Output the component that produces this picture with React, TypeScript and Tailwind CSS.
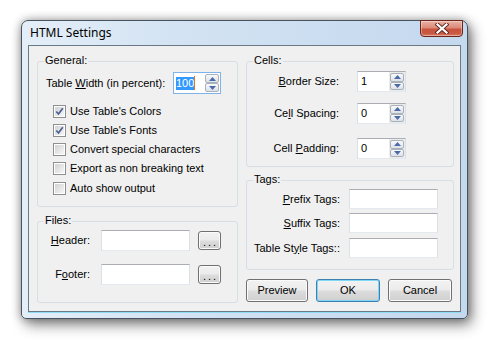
import React from "react";

const F = "font-['Liberation_Sans',Arial,sans-serif] text-[11px] leading-[13px] text-black";

function Field({ w, h = 20, children }: { w: number; h?: number; children?: React.ReactNode }) {
  return (
    <div
      className="flex items-center border border-t-[#abadb3] border-x-[#dbdfe6] border-b-[#e3e9ef] bg-white pl-[3px]"
      style={{ width: w, height: h }}
    >
      {children}
    </div>
  );
}

function SpinBtn({ up }: { up?: boolean }) {
  return (
    <div className="flex flex-1 items-center justify-center rounded-[2px] border border-[#a9b1bb] bg-linear-to-b from-[#f8f9fa] to-[#dde2e8]">
      <svg width="7" height="4" viewBox="0 0 7 4">
        {up ? <path d="M0 4 L3.5 0 L7 4 Z" fill="#4d6aa8" /> : <path d="M0 0 L3.5 4 L7 0 Z" fill="#4d6aa8" />}
      </svg>
    </div>
  );
}

function Spin({ value }: { value: string }) {
  return (
    <div className="flex h-[21px] w-[49px] border border-t-[#abadb3] border-x-[#dbdfe6] border-b-[#e3e9ef] bg-white">
      <div className="flex flex-1 items-center pl-[3px]">{value}</div>
      <div className="flex w-[16px] flex-col bg-[#ececec] p-px">
        <SpinBtn up />
        <SpinBtn />
      </div>
    </div>
  );
}

function Check({ checked, label }: { checked?: boolean; label: string }) {
  return (
    <div className="flex h-[19px] items-center gap-[4px]">
      <div className="flex h-[13px] w-[13px] items-center justify-center border border-[#8e8f8f] bg-white p-px">
        <div className="flex h-full w-full items-center justify-center bg-[linear-gradient(135deg,#d2d2d2,#f6f6f6)]">
          {checked && (
            <svg width="9" height="9" viewBox="0 0 9 9">
              <path d="M1.3 4.5 L3.5 7 L7.8 1.2" stroke="#4a5f97" strokeWidth="1.7" fill="none" />
            </svg>
          )}
        </div>
      </div>
      <span>{label}</span>
    </div>
  );
}

function Group({
  label,
  w,
  h,
  children,
  className = "",
}: {
  label: string;
  w: number;
  h: number;
  children: React.ReactNode;
  className?: string;
}) {
  return (
    <div
      className={"relative rounded-[3px] border border-[#d5dfe5] " + className}
      style={{ width: w, height: h }}
    >
      <span className="absolute left-[6px] top-[-8px] bg-[#f0f0f0] px-px">{label}</span>
      {children}
    </div>
  );
}

function Btn({ w, h = 23, def, children }: { w: number; h?: number; def?: boolean; children: React.ReactNode }) {
  return (
    <div
      className={
        "flex items-center justify-center rounded-[3px] border bg-[linear-gradient(#f2f2f2_0%,#ebebeb_48%,#dddddd_52%,#cfcfcf_100%)] " +
        (def
          ? "border-[#3c7fb1] shadow-[inset_0_0_0_1px_#7fd6f7]"
          : "border-[#707070] shadow-[inset_0_0_0_1px_#fbfbfb]")
      }
      style={{ width: w, height: h }}
    >
      {children}
    </div>
  );
}

export default function App() {
  return (
    <div className={"h-[343px] w-[495px] bg-white pl-[21px] pt-[20px] " + F}>
      <div className="flex h-[299px] w-[447px] flex-col rounded-t-[7px] rounded-b-[5px] border border-[#48535f] bg-[linear-gradient(90deg,#e4eef8_0%,#d3e3f3_35%,#c4d8ee_100%)] shadow-[0_0_10px_rgba(0,0,0,0.35),4px_6px_14px_rgba(0,0,0,0.45)]">
        {/* title bar */}
        <div className="flex h-[24px] items-start justify-between">
          <span className="pl-[8px] pt-[5px] font-['Noto_Sans',sans-serif] text-[12px] leading-[14px] text-black">
            HTML Settings
          </span>
          <div className="mr-[4px] mt-[-1px] flex h-[17px] w-[43px] items-center justify-center rounded-b-[4px] border border-[#6b2418] bg-[linear-gradient(#eab2a4_0%,#dc8a78_45%,#c8533f_55%,#c85a44_85%,#e0866c_100%)] shadow-[inset_0_0_0_1px_rgba(255,255,255,0.35)]">
            <svg width="14" height="11" viewBox="0 0 14 11">
              <path d="M2.5 1.5 L11.5 9.5 M11.5 1.5 L2.5 9.5" stroke="#5a2a22" strokeWidth="4" strokeLinecap="square" />
              <path d="M2.5 1.5 L11.5 9.5 M11.5 1.5 L2.5 9.5" stroke="#ffffff" strokeWidth="2.2" strokeLinecap="square" />
            </svg>
          </div>
        </div>
        {/* client */}
        <div className="mx-[6px] mb-[6px] flex flex-1 gap-[8px] border border-[#6b7886] bg-[#f0f0f0] pl-[8px] pt-[15px] shadow-[0_1px_0_#8fdcf5]">
          {/* left column */}
          <div className="flex flex-col gap-[14px]">
            <Group label="General:" w={201} h={146}>
              <div className="flex flex-col pl-[8px] pt-[10px]">
                <div className="flex h-[22px] items-center">
                  <span className="w-[127px]">
                    Table <span className="underline">W</span>idth (in percent):
                  </span>
                  <div className="flex h-[22px] w-[48px] border border-[#7eb4ea] bg-white">
                    <div className="flex flex-1 items-center pl-[2px]">
                      <span className="bg-[#3399ff] text-white">100</span>
                      <span className="h-[14px] w-px bg-[#e07a1f]" />
                    </div>
                    <div className="flex w-[16px] flex-col p-px">
                      <SpinBtn up />
                      <SpinBtn />
                    </div>
                  </div>
                </div>
                <div className="mt-[8px] flex flex-col pl-[7px]">
                  <Check checked label="Use Table's Colors" />
                  <Check checked label="Use Table's Fonts" />
                  <Check label="Convert special characters" />
                  <Check label="Export as non breaking text" />
                  <div className="mt-[1px]">
                    <Check label="Auto show output" />
                  </div>
                </div>
              </div>
            </Group>
            <Group label="Files:" w={201} h={82}>
              <div className="flex flex-col gap-[13px] pt-[8px]">
                <div className="flex h-[21px] items-center">
                  <span className="w-[52px] text-right">
                    <span className="underline">H</span>eader:
                  </span>
                  <div className="ml-[11px]">
                    <Field w={89} h={21} />
                  </div>
                  <div className="ml-[8px]">
                    <Btn w={23} h={19}>
                      <span className="tracking-[2px] pl-[2px] pt-[3px]">...</span>
                    </Btn>
                  </div>
                </div>
                <div className="flex h-[21px] items-center">
                  <span className="w-[52px] text-right">
                    F<span className="underline">o</span>oter:
                  </span>
                  <div className="ml-[11px]">
                    <Field w={89} h={21} />
                  </div>
                  <div className="ml-[8px]">
                    <Btn w={23} h={19}>
                      <span className="tracking-[2px] pl-[2px] pt-[3px]">...</span>
                    </Btn>
                  </div>
                </div>
              </div>
            </Group>
          </div>
          {/* right column */}
          <div className="flex flex-col">
            <Group label="Cells:" w={208} h={106}>
              <div className="flex flex-col pt-[9px]">
                <div className="flex h-[21px] items-center">
                  <span className="w-[92px] text-right">
                    <span className="underline">B</span>order Size:
                  </span>
                  <div className="ml-[18px]">
                    <Spin value="1" />
                  </div>
                </div>
                <div className="mt-[11px] flex h-[21px] items-center">
                  <span className="w-[92px] text-right">
                    Ce<span className="underline">l</span>l Spacing:
                  </span>
                  <div className="ml-[18px]">
                    <Spin value="0" />
                  </div>
                </div>
                <div className="mt-[14px] flex h-[21px] items-center">
                  <span className="w-[92px] text-right">
                    Cell <span className="underline">P</span>adding:
                  </span>
                  <div className="ml-[18px]">
                    <Spin value="0" />
                  </div>
                </div>
              </div>
            </Group>
            <Group label="Tags:" w={208} h={90} className="mt-[13px]">
              <div className="flex flex-col pt-[8px]">
                <div className="flex h-[20px] items-center">
                  <span className="w-[93px] text-right">
                    <span className="underline">P</span>refix Tags:
                  </span>
                  <div className="ml-[9px]">
                    <Field w={89} />
                  </div>
                </div>
                <div className="mt-[4px] flex h-[20px] items-center">
                  <span className="w-[93px] text-right">
                    <span className="underline">S</span>uffix Tags:
                  </span>
                  <div className="ml-[9px]">
                    <Field w={89} />
                  </div>
                </div>
                <div className="mt-[5px] flex h-[20px] items-center">
                  <span className="w-[93px] text-right">
                    Table St<span className="underline">y</span>le Tags::
                  </span>
                  <div className="ml-[9px]">
                    <Field w={89} />
                  </div>
                </div>
              </div>
            </Group>
            <div className="mt-[9px] flex gap-[8px]">
              <Btn w={62}>Preview</Btn>
              <Btn w={64} def>
                OK
              </Btn>
              <Btn w={64}>Cancel</Btn>
            </div>
          </div>
        </div>
      </div>
    </div>
  );
}
